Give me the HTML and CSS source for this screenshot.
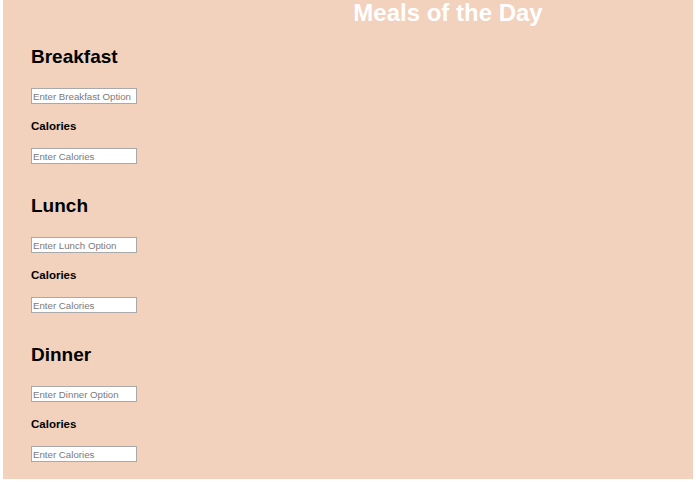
FILE: index.html
```html
<!DOCTYPE html>
<html>
<head>
<meta charset="utf-8">
<link rel="stylesheet" href="styles.css">
</head>
<body>
<div class="page">
  <h1 class="title">Meals of the Day</h1>
  <section class="meal">
    <h2 class="meal-name">Breakfast</h2>
    <input class="field" type="text" placeholder="Enter Breakfast Option">
    <h3 class="label">Calories</h3>
    <input class="field" type="text" placeholder="Enter Calories">
  </section>
  <section class="meal">
    <h2 class="meal-name">Lunch</h2>
    <input class="field" type="text" placeholder="Enter Lunch Option">
    <h3 class="label">Calories</h3>
    <input class="field" type="text" placeholder="Enter Calories">
  </section>
  <section class="meal">
    <h2 class="meal-name">Dinner</h2>
    <input class="field" type="text" placeholder="Enter Dinner Option">
    <h3 class="label">Calories</h3>
    <input class="field" type="text" placeholder="Enter Calories">
  </section>
</div>
</body>
</html>
```

FILE: styles.css
```css
html, body {
  margin: 0;
  padding: 0;
  background: #ffffff;
}
body {
  font-family: "Liberation Sans", Arial, sans-serif;
}
.page {
  margin: 0 3px;
  height: 479px;
  background: #f2d1bd;
  padding: 0 0 0 28px;
  box-sizing: border-box;
  display: flex;
  flex-direction: column;
  align-items: flex-start;
}
.title {
  align-self: stretch;
  margin: 0 0 20px 0;
  padding-left: 172px;
  text-align: center;
  color: #ffffff;
  font-size: 24px;
  line-height: 26px;
  font-weight: bold;
}
.meal {
  display: flex;
  flex-direction: column;
  align-items: flex-start;
  margin-bottom: 31px;
}
.meal-name {
  margin: 0 0 20px 0;
  font-size: 19px;
  line-height: 22px;
  font-weight: bold;
  color: #000;
}
.label {
  margin: 15px 0 15px 0;
  font-size: 11.5px;
  line-height: 14px;
  font-weight: bold;
  color: #000;
}
.field {
  width: 106px;
  height: 16px;
  box-sizing: border-box;
  margin: 0;
  padding: 0 1px;
  border: 1px solid #a9a9a9;
  background: #fff;
  font-family: "Liberation Sans", Arial, sans-serif;
  font-size: 9.7px;
  color: #333;
}
.field::placeholder {
  color: #7a7a7a;
}
```
